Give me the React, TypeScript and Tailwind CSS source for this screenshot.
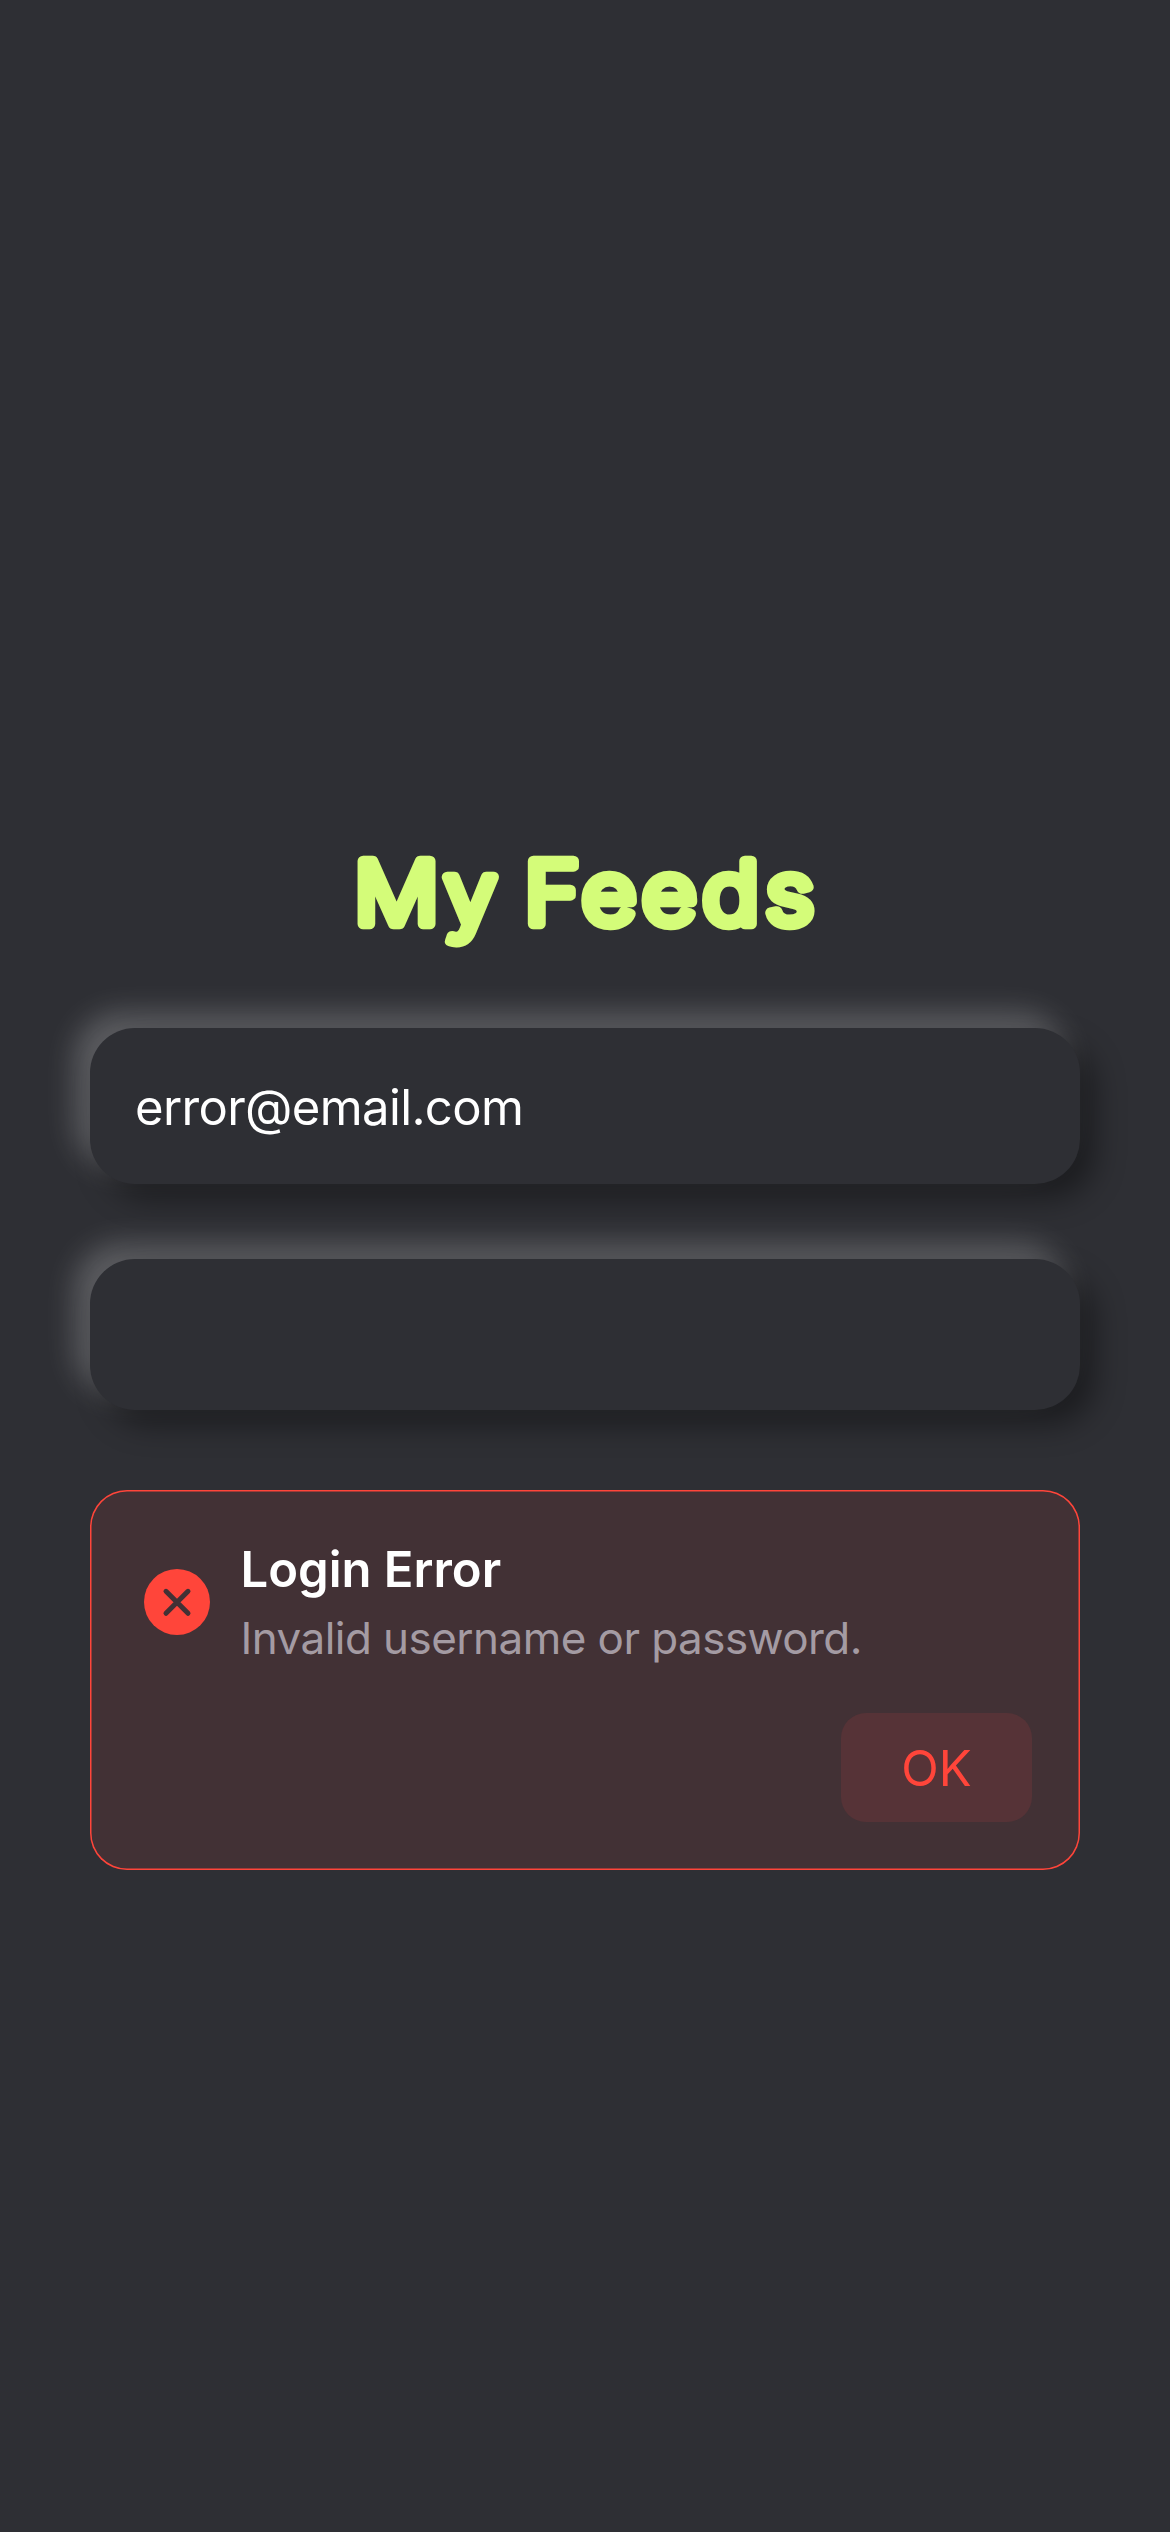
import type { ReactNode } from "react";

function Title() {
  return (
    <h1 className="h-[160px] w-full">
      <svg width="990" height="160" viewBox="90 820 990 160" className="block overflow-visible">
        <text
          transform="scale(1.08 1)"
          x="328 411.3 463 485.6 538.6 594.4 650.4 708.8"
          y="924"
          className="fill-[#d4fc79] stroke-[#d4fc79] font-['Inter',sans-serif] text-[87px] font-light"
          strokeWidth="10.5"
          strokeLinejoin="round"
          strokeLinecap="round"
        >
          My Feeds
        </text>
      </svg>
    </h1>
  );
}

function Field({ className, children }: { className: string; children?: ReactNode }) {
  return (
    <div
      className={`flex w-full items-center rounded-[45px] bg-[#2e2f34] pl-[45px] shadow-[15px_15px_30px_rgba(0,0,0,0.4),-15px_-15px_30px_rgba(255,255,255,0.23)] ${className}`}
    >
      {children}
    </div>
  );
}

function ErrorIcon() {
  return (
    <svg width="66" height="66" viewBox="0 0 66 66" className="mt-[20px] shrink-0">
      <circle cx="33" cy="33" r="33" fill="#ff453a" />
      <path d="M22 22.3 44 44.3M44 22.3 22 44.3" stroke="#423135" strokeWidth="5" strokeLinecap="round" />
    </svg>
  );
}

export default function App() {
  return (
    <main className="flex h-[2532px] w-[1170px] flex-col bg-[#2e2f34] px-[90px] pt-[820px] font-['Inter',sans-serif] text-white">
      <Title />
      <Field className="mt-[48px] h-[156px]">
        <span className="pt-[3px] text-[49px] leading-[60px] tracking-[-0.63px]">error@email.com</span>
      </Field>
      <Field className="mt-[75px] h-[151px]" />

      <section className="mt-[80px] flex h-[380px] w-full flex-col rounded-[37px] bg-[#423135] pt-[50px] pr-[48px] pl-[54px] inset-ring-[1.5px] inset-ring-[#ff453a]">
        <div className="flex gap-[30.5px] pt-[9px]">
          <ErrorIcon />
          <div className="-mt-[9px]">
            <h2 className="text-[49px] leading-[60px] font-semibold">Login Error</h2>
            <p className="mt-[11px] text-[44px] leading-[54px] tracking-[-0.55px] text-[#a49ba3]">
              Invalid username or password.
            </p>
          </div>
        </div>
        <button className="mt-[48px] h-[109px] w-[191px] self-end rounded-[25px] bg-[#563337] pt-[2px] text-[49px] text-[#ff453a]">
          OK
        </button>
      </section>
    </main>
  );
}
